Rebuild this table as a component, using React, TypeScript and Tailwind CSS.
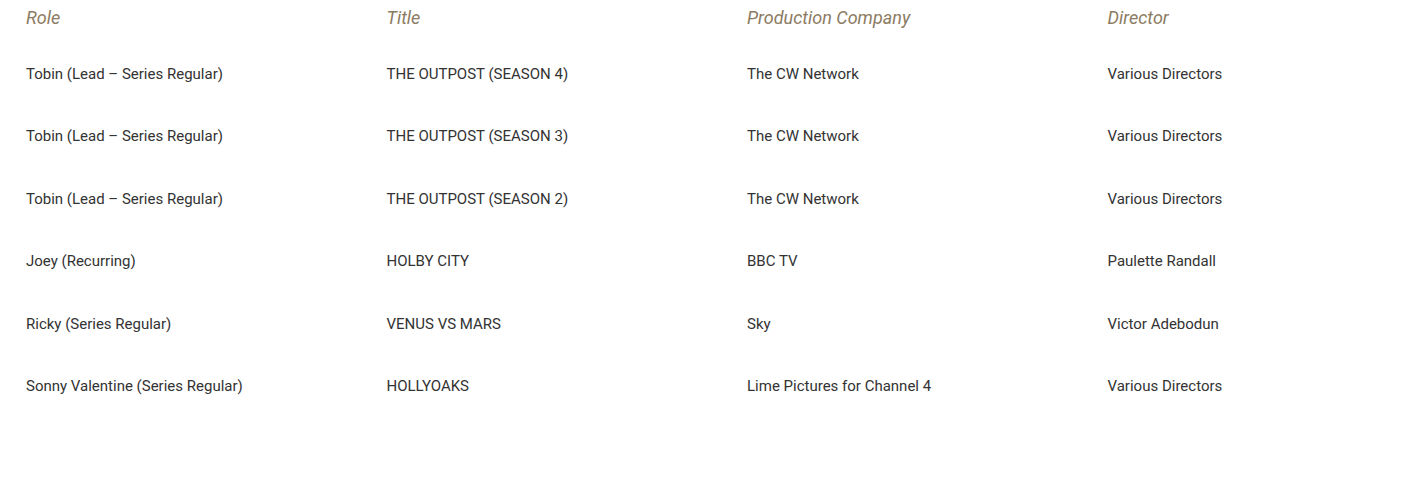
import React from 'react'

interface Credit {
  role: string;
  title: string;
  company: string;
  director: string;
}

const credits: Credit[] = [
  { role: 'Tobin (Lead – Series Regular)', title: 'THE OUTPOST (SEASON 4)', company: 'The CW Network', director: 'Various Directors' },
  { role: 'Tobin (Lead – Series Regular)', title: 'THE OUTPOST (SEASON 3)', company: 'The CW Network', director: 'Various Directors' },
  { role: 'Tobin (Lead – Series Regular)', title: 'THE OUTPOST (SEASON 2)', company: 'The CW Network', director: 'Various Directors' },
  { role: 'Joey (Recurring)', title: 'HOLBY CITY', company: 'BBC TV', director: 'Paulette Randall' },
  { role: 'Ricky (Series Regular)', title: 'VENUS VS MARS', company: 'Sky', director: 'Victor Adebodun' },
  { role: 'Sonny Valentine (Series Regular)', title: 'HOLLYOAKS', company: 'Lime Pictures for Channel 4', director: 'Various Directors' },
];

const headings = ['Role', 'Title', 'Production Company', 'Director'];

const App = () => {
  return (
    <div className="w-[1420px] h-[477px] overflow-hidden bg-white font-['Roboto','Liberation_Sans',sans-serif]">
      <div className="pl-[26px]">
        <div className="grid grid-cols-[360.5px_360.5px_360.5px_360.5px] h-[35px] items-center">
          {headings.map(h => (
            <div key={h} className="text-[18px] italic text-[#8c7b62]">{h}</div>
          ))}
        </div>
        <div className="pt-[8px]">
          {credits.map((c, i) => (
            <div key={i} className="grid grid-cols-[360.5px_360.5px_360.5px_360.5px] h-[62.4px] items-center text-[15px] text-[#333333]">
              <div>{c.role}</div>
              <div>{c.title}</div>
              <div>{c.company}</div>
              <div>{c.director}</div>
            </div>
          ))}
        </div>
      </div>
    </div>
  )
}

export default App;
